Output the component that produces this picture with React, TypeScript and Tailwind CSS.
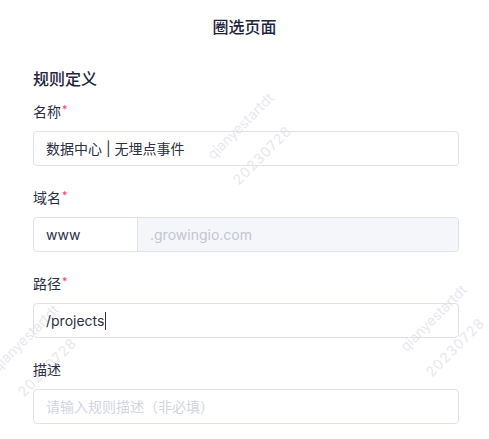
import React from "react";

const font = "font-['Inter','Noto_Sans_CJK_SC',sans-serif]";

function Label({ text, required }: { text: string; required?: boolean }) {
  return (
    <div className="mb-2 flex h-[22px] items-center text-[14px] leading-[22px] text-[#2b3047]">
      {text}
      {required && <span className="ml-[1px] -mt-[5px] text-[11px] leading-none text-[#f0466b]">*</span>}
    </div>
  );
}

// watermark tile, anchored at its top-left corner and turned -45deg around it
function Watermark({ x, y }: { x: number; y: number }) {
  return (
    <div
      className="pointer-events-none absolute flex origin-top-left flex-col items-start whitespace-nowrap text-[14px] leading-[36px] text-[#e8e8ed]"
      style={{ left: x, top: y, transform: "rotate(-45deg)" }}
    >
      <span>qianyestartdt</span>
      <span className="tracking-[1px]">20230728</span>
    </div>
  );
}

export default function App() {
  return (
    <div className={`relative h-[439px] w-[489px] overflow-hidden bg-white ${font}`}>
      <Watermark x={197} y={144} />
      <Watermark x={390} y={336} />
      <Watermark x={-18} y={356} />

      <div className="relative pt-[15px] text-center text-[16px] font-medium leading-[24px] text-[#1f2540]">
        圈选页面
      </div>

      <div className="relative w-[459px] pl-[33px] pt-[28px]">
        <div className="mb-[10px] text-[16px] font-medium leading-[24px] text-[#1f2540]">规则定义</div>

        <Label text="名称" required />
        <div className="mb-[21px] flex h-[35px] items-center rounded-[4px] border border-[#dfe1ec] px-3 text-[14px] text-[#2b3047]">
          数据中心 | 无埋点事件
        </div>

        <Label text="域名" required />
        <div className="mb-[21px] flex h-[35px] rounded-[4px] border border-[#dfe1ec] text-[14px]">
          <div className="flex w-[104px] items-center border-r border-[#dfe1ec] px-3 text-[#2b3047]">www</div>
          <div className="flex flex-1 items-center rounded-r-[4px] bg-[#f5f6fa] px-3 text-[#c3c5d3]">.growingio.com</div>
        </div>

        <Label text="路径" required />
        <div className="mb-[21px] flex h-[35px] items-center rounded-[4px] border border-[#dfe1ec] px-3 text-[14px] text-[#2b3047]">
          /projects
          <span className="ml-[1px] h-[18px] w-[1px] bg-[#2b3047]" />
        </div>

        <Label text="描述" />
        <div className="flex h-[35px] items-center rounded-[4px] border border-[#dfe1ec] px-3 text-[14px] text-[#d3d5df]">
          请输入规则描述（非必填）
        </div>
      </div>
    </div>
  );
}
